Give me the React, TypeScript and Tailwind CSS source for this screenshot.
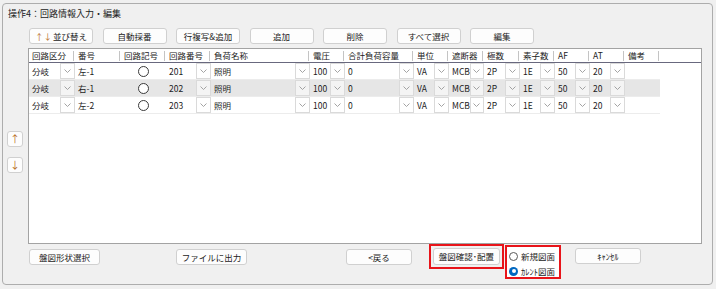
import React from "react";

const cols = [
  { h: "回路区分", w: "w-[46px]", dd: true },
  { h: "番号", w: "w-[46px]", dd: false },
  { h: "回路記号", w: "w-[45px]", dd: false, circle: true },
  { h: "回路番号", w: "w-[45px]", dd: true },
  { h: "負荷名称", w: "w-[99px]", dd: true },
  { h: "電圧", w: "w-[35px]", dd: true },
  { h: "合計負荷容量", w: "w-[69px]", dd: true },
  { h: "単位", w: "w-[35px]", dd: true },
  { h: "遮断器", w: "w-[35px]", dd: true },
  { h: "極数", w: "w-[36px]", dd: true },
  { h: "素子数", w: "w-[35px]", dd: true },
  { h: "AF", w: "w-[35px]", dd: true },
  { h: "AT", w: "w-[35px]", dd: true },
  { h: "備考", w: "w-[35px]", dd: false },
];

const rows = [
  ["分岐", "左-1", "", "201", "照明", "100", "0", "VA", "MCB", "2P", "1E", "50", "20", ""],
  ["分岐", "右-1", "", "202", "照明", "100", "0", "VA", "MCB", "2P", "1E", "50", "20", ""],
  ["分岐", "左-2", "", "203", "照明", "100", "0", "VA", "MCB", "2P", "1E", "50", "20", ""],
];

function Btn({ children, className = "" }: { children: React.ReactNode; className?: string }) {
  return (
    <div
      className={`flex items-center justify-center h-[16px] bg-[#fdfdfd] border border-[#d0d0d0] rounded-[3px] text-[8.5px] leading-none text-[#1b1b1b] ${className}`}
    >
      {children}
    </div>
  );
}

function Chevron() {
  return (
    <svg width="7" height="4" viewBox="0 0 7 4">
      <path d="M0.5 0.5 L3.5 3.5 L6.5 0.5" fill="none" stroke="#9a9a9a" strokeWidth="0.9" />
    </svg>
  );
}

function Dropdown({ alt }: { alt: boolean }) {
  return (
    <div
      className={`w-[15px] h-full flex items-center justify-center border border-[#dadada] ${alt ? "bg-[#f4f4f4]" : "bg-white"}`}
    >
      <Chevron />
    </div>
  );
}

export default function App() {
  return (
    <div className="w-[716px] h-[289px] bg-[#f0f0f0] pt-[3px] pl-[2px] font-['Noto_Sans_CJK_JP',sans-serif] text-[#1b1b1b] overflow-hidden">
      <div className="w-[711px] h-[282px] border border-[#adadad] rounded-[4px] flex flex-col">
        <div className="pl-[5px] mt-[4px] h-[12px] leading-[12px] text-[9px] text-[#222]">
          操作4：回路情報入力・編集
        </div>
        <div className="flex mt-[8px]">
          {/* left arrow column */}
          <div className="w-[25px] pl-[4px] pt-[103px] flex flex-col gap-[10px]">
            <div className="w-[16px] h-[16px] bg-[#fdfdfd] border border-[#d0d0d0] rounded-[3px] flex items-center justify-center text-[10px] leading-none text-[#b86d28]">
              ↑
            </div>
            <div className="w-[16px] h-[16px] bg-[#fdfdfd] border border-[#d0d0d0] rounded-[3px] flex items-center justify-center text-[10px] leading-none text-[#b86d28]">
              ↓
            </div>
          </div>
          {/* main */}
          <div className="w-[674px] flex flex-col">
            <div className="flex h-[16px] pl-[1px] gap-[9.5px]">
              <Btn className="w-[64px]">
                <span className="text-[#b86d28] mr-[1px]">↑↓</span>並び替え
              </Btn>
              <Btn className="w-[64px]">自動採番</Btn>
              <Btn className="w-[64px]">行複写&amp;追加</Btn>
              <Btn className="w-[64px]">追加</Btn>
              <Btn className="w-[64px]">削除</Btn>
              <Btn className="w-[64px]">すべて選択</Btn>
              <Btn className="w-[64px]">編集</Btn>
            </div>
            {/* table */}
            <div className="mt-[4px] h-[196px] w-[674px] border border-[#a3a3a3] bg-white flex flex-col">
              <div className="flex h-[14px] border-b border-[#68687e] bg-white">
                {cols.map((c, i) => (
                  <div key={i} className={`${c.w} flex items-center justify-between pl-[3px] text-[8.5px] leading-none text-[#222]`}>
                    <span className="whitespace-nowrap">{c.h}</span>
                    <span className="w-px h-[10px] bg-[#c4c4c4] mr-[1px]" />
                  </div>
                ))}
              </div>
              {rows.map((r, ri) => {
                const alt = ri === 1;
                return (
                  <div
                    key={ri}
                    className={`flex h-[17px] w-[631px] border-b border-[#ececec] ${alt ? "bg-[#e6e6e6]" : "bg-white"}`}
                  >
                    {cols.map((c, ci) => (
                      <div key={ci} className={`${c.w} h-full flex items-center justify-between`}>
                        {c.circle ? (
                          <div className="flex-1 flex items-center justify-center">
                            <div className="w-[11px] h-[11px] rounded-full border border-[#3a3a3a] bg-white" />
                          </div>
                        ) : (
                          <span className="pl-[3px] text-[8.5px] leading-none whitespace-nowrap text-[#1b1b1b]">{r[ci]}</span>
                        )}
                        {c.dd && <Dropdown alt={alt} />}
                      </div>
                    ))}
                  </div>
                );
              })}
            </div>
            {/* bottom row */}
            <div className="flex items-start">
              <Btn className="w-[71px] ml-[1px] mt-[5px]">盤図形状選択</Btn>
              <Btn className="w-[71px] ml-[76px] mt-[5px]">ファイルに出力</Btn>
              <Btn className="w-[66px] ml-[99px] mt-[5px]">&lt;戻る</Btn>
              <div className="ml-[17px] w-[75px] h-[25px] border-2 border-[#e8141a] p-[2px]">
                <Btn className="w-[67px] h-[17px]">盤図確認･配置</Btn>
              </div>
              <div className="ml-[1px] mt-[1px] w-[56px] h-[34px] border-2 border-[#e8141a] flex flex-col pl-[2px] pt-[4px] gap-[5px] bg-white">
                <div className="flex items-center gap-[3px] h-[10px]">
                  <div className="w-[9px] h-[9px] rounded-full border border-[#5a5a5a] bg-white" />
                  <span className="text-[8.5px] leading-none">新規図面</span>
                </div>
                <div className="flex items-center gap-[3px] h-[10px]">
                  <div className="w-[9px] h-[9px] rounded-full bg-[#0067c0] flex items-center justify-center">
                    <div className="w-[4px] h-[4px] rounded-full bg-white" />
                  </div>
                  <span className="text-[8.5px] leading-none">ｶﾚﾝﾄ図面</span>
                </div>
              </div>
              <Btn className="w-[66px] ml-[14px] mt-[4px]">ｷｬﾝｾﾙ</Btn>
            </div>
          </div>
        </div>
      </div>
    </div>
  );
}
